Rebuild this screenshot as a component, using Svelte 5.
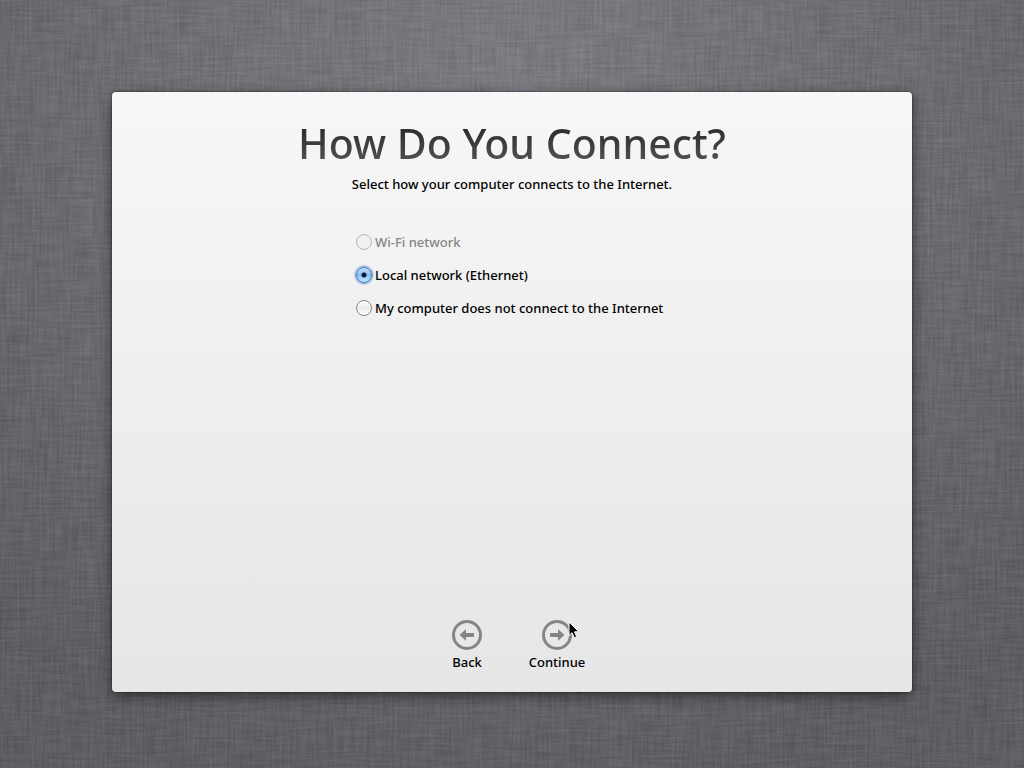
<script>
  const options = [
    { id: 'wifi', label: 'Wi-Fi network', disabled: true },
    { id: 'ethernet', label: 'Local network (Ethernet)', disabled: false },
    { id: 'none', label: 'My computer does not connect to the Internet', disabled: false }
  ];
  let selected = $state('ethernet');
</script>

<div class="desktop">
  <svg class="linen" aria-hidden="true">
    <filter id="weft" x="0" y="0" width="100%" height="100%" color-interpolation-filters="sRGB">
      <feTurbulence type="fractalNoise" baseFrequency="0.03 0.4" numOctaves="2" seed="4" />
      <feColorMatrix values="1.6 0 0 0 -0.35  1.6 0 0 0 -0.35  1.6 0 0 0 -0.33  0 0 0 0 1" />
    </filter>
    <filter id="warp" x="0" y="0" width="100%" height="100%" color-interpolation-filters="sRGB">
      <feTurbulence type="fractalNoise" baseFrequency="0.4 0.025" numOctaves="2" seed="9" />
      <feColorMatrix values="1.6 0 0 0 -0.35  1.6 0 0 0 -0.35  1.6 0 0 0 -0.33  0 0 0 0 1" />
    </filter>
    <rect width="100%" height="100%" filter="url(#weft)" opacity="0.05" />
    <rect width="100%" height="100%" filter="url(#warp)" opacity="0.05" />
  </svg>

  <main class="panel">
    <h1>How Do You Connect?</h1>
    <p class="hint">Select how your computer connects to the Internet.</p>

    <div class="options" role="radiogroup" aria-label="Connection">
      {#each options as option (option.id)}
        <label class="option" class:disabled={option.disabled}>
          <input type="radio" name="connection" value={option.id} disabled={option.disabled} bind:group={selected} />
          <span>{option.label}</span>
        </label>
      {/each}
    </div>

    <nav class="steps">
      <button type="button">
        <svg viewBox="0 0 30 30" aria-hidden="true">
          <circle cx="15" cy="15" r="13.5" />
          <path d="M7.5 15 L14 9.3 V13 H22 V17 H14 V20.7 Z" />
        </svg>
        <span>Back</span>
      </button>
      <button type="button">
        <svg viewBox="0 0 30 30" aria-hidden="true">
          <circle cx="15" cy="15" r="13.5" />
          <path d="M22.5 15 L16 9.3 V13 H8 V17 H16 V20.7 Z" />
        </svg>
        <span>Continue</span>
        <svg class="pointer" viewBox="0 0 12 18" aria-hidden="true">
          <path d="M1 1 V14.6 L4.1 11.7 L6.3 16.8 L8.7 15.8 L6.5 10.8 H10.8 Z" />
        </svg>
      </button>
    </nav>
  </main>
</div>

<style>
  :global(body) {
    margin: 0;
  }

  .desktop {
    position: relative;
    display: flex;
    align-items: center;
    justify-content: center;
    box-sizing: border-box;
    min-height: 100vh;
    padding: 48px 32px 32px;
    overflow: hidden;
    background: radial-gradient(ellipse 75% 95% at 50% 10%, #7b7d82 0%, #6b6d71 55%, #5b5d61 100%);
    color: #000;
    font: 500 13px/16px 'Lucida Grande', 'Noto Sans', sans-serif;
  }

  .linen {
    position: absolute;
    inset: 0;
    width: 100%;
    height: 100%;
  }

  .panel {
    position: relative;
    display: flex;
    flex-direction: column;
    align-items: center;
    box-sizing: border-box;
    width: 100%;
    max-width: 800px;
    min-height: 600px;
    padding: 26px 24px 22px;
    border-radius: 4px;
    background: linear-gradient(#f7f7f7, #e6e6e6);
    box-shadow: 0 0 2px rgba(0, 0, 0, 0.7), 0 4px 14px rgba(0, 0, 0, 0.5);
  }

  h1 {
    margin: 0;
    background: linear-gradient(#2c2c2c 20%, #505050 85%);
    background-clip: text;
    color: transparent;
    font-size: 41px;
    font-weight: 500;
    line-height: 50px;
    text-align: center;
  }

  .hint {
    margin: 8px 0 0;
    text-align: center;
  }

  .options {
    display: grid;
    gap: 17px;
    width: 312px;
    max-width: 100%;
    margin-top: 42px;
  }

  .option {
    display: flex;
    align-items: center;
    gap: 3px;
    white-space: nowrap;
  }

  .disabled {
    color: #858585;
  }

  input {
    flex: none;
    appearance: none;
    box-sizing: border-box;
    width: 16px;
    height: 16px;
    margin: 0;
    border: 1px solid #858585;
    border-radius: 50%;
    background: linear-gradient(#fff, #ececec 50%, #fff);
  }

  input:disabled {
    border-color: #b8b8b8;
    background: #f1f1f1;
  }

  input:checked {
    border-color: #4a7fc4;
    background:
      radial-gradient(circle, #081a38 0 2px, transparent 3px),
      linear-gradient(#c4def8, #8abdf2 50%, #c2ecff);
    box-shadow: 0 0 2px 1px rgba(76, 132, 200, 0.9);
  }

  .steps {
    display: grid;
    grid-template-columns: 90px 90px;
    margin-top: auto;
  }

  button {
    position: relative;
    display: flex;
    flex-direction: column;
    align-items: center;
    gap: 4px;
    padding: 0;
    border: 0;
    background: none;
    color: inherit;
    font: inherit;
  }

  button > svg {
    width: 30px;
    height: 30px;
  }

  circle {
    fill: none;
    stroke: #858585;
    stroke-width: 3;
  }

  path {
    fill: #858585;
  }

  button > .pointer {
    position: absolute;
    top: 1px;
    left: 56px;
    width: 12px;
    height: 18px;
  }

  .pointer path {
    fill: #000;
    stroke: #fff;
    stroke-width: 1;
  }
</style>
